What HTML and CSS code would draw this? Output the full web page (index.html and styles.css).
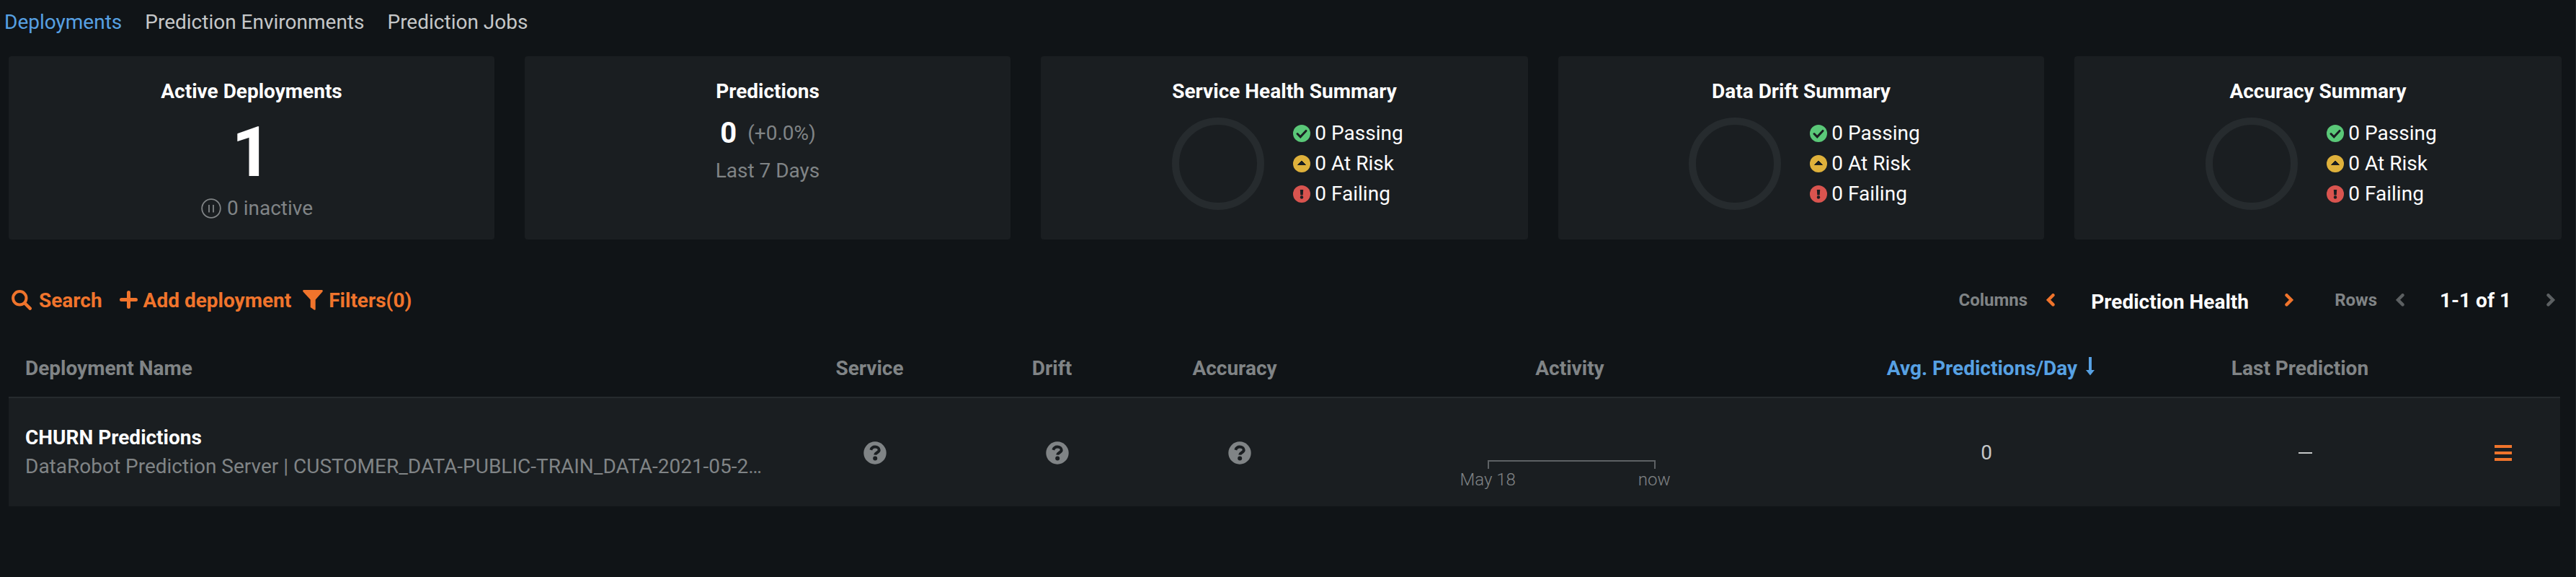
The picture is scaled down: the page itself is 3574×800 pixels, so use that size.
FILE: index.html
```html
<!DOCTYPE html>
<html lang="en">
<head>
<meta charset="utf-8">
<title>Deployments</title>
<link rel="stylesheet" href="styles.css">
</head>
<body>
<svg class="defs" width="0" height="0" aria-hidden="true">
  <symbol id="pass" viewBox="0 0 24 24"><circle cx="12" cy="12" r="12" fill="#5ac878"/><path d="M6 12.500l4.200 4.300 7.800-8.400" fill="none" stroke="#1a1e21" stroke-width="3" stroke-linecap="round"/></symbol>
  <symbol id="risk" viewBox="0 0 24 24"><circle cx="12" cy="12" r="12" fill="#dfb13b"/><path d="M12 8l5.500 5.500h-11z" fill="#1a1e21" stroke="#1a1e21" stroke-linejoin="round"/></symbol>
  <symbol id="fail" viewBox="0 0 24 24"><circle cx="12" cy="12" r="12" fill="#d9544f"/><path d="M9.800 6h4.400l-.5 7.500h-3.400z" fill="#1a1e21"/><circle cx="12" cy="16.500" r="2.200" fill="#1a1e21"/></symbol>
  <symbol id="help" viewBox="0 0 32 32"><circle cx="16" cy="16" r="15.700" fill="#808486"/><path d="M10.300 11.800c1-2.800 3-4.200 5.700-4.200 3.300 0 5.700 1.800 5.700 4.400 0 3.400-5.200 3.500-5.500 6.600" fill="none" stroke="#1a1e21" stroke-width="4"/><circle cx="16.200" cy="23.600" r="3" fill="#1a1e21"/></symbol>
</svg>
<nav class="tabs">
  <a class="tab active">Deployments</a>
  <a class="tab">Prediction Environments</a>
  <a class="tab">Prediction Jobs</a>
</nav>
<section class="cards">
  <article class="card">
    <h2>Active Deployments</h2>
    <div class="big">1</div>
    <div class="inactive"><svg width="28" height="28" viewBox="0 0 28 28" fill="none" stroke="#808486" stroke-width="1.800"><circle cx="14" cy="14" r="12.800"/><path d="M11 9v10.500M17 9v10.500"/></svg>0 inactive</div>
  </article>
  <article class="card">
    <h2>Predictions</h2>
    <div class="count"><b>0</b><span>(+0.0%)</span></div>
    <div class="period">Last 7 Days</div>
  </article>
  <article class="card">
    <h2>Service Health Summary</h2>
    <div class="summary"><div class="ring"></div><ul>
      <li><svg><use href="#pass"/></svg>0 Passing</li><li><svg><use href="#risk"/></svg>0 At Risk</li><li><svg><use href="#fail"/></svg>0 Failing</li></ul></div>
  </article>
  <article class="card">
    <h2>Data Drift Summary</h2>
    <div class="summary"><div class="ring"></div><ul>
      <li><svg><use href="#pass"/></svg>0 Passing</li><li><svg><use href="#risk"/></svg>0 At Risk</li><li><svg><use href="#fail"/></svg>0 Failing</li></ul></div>
  </article>
  <article class="card">
    <h2>Accuracy Summary</h2>
    <div class="summary"><div class="ring"></div><ul>
      <li><svg><use href="#pass"/></svg>0 Passing</li><li><svg><use href="#risk"/></svg>0 At Risk</li><li><svg><use href="#fail"/></svg>0 Failing</li></ul></div>
  </article>
</section>
<section class="toolbar">
  <a class="action search"><svg width="28" height="28" viewBox="0 0 28 28" fill="none" stroke="currentColor" stroke-linecap="round"><circle cx="11.300" cy="11.300" r="9.200" stroke-width="4"/><path d="M18.500 18.500l7.200 7.200" stroke-width="4.500"/></svg>Search</a>
  <a class="action add"><svg width="25" height="25" viewBox="0 0 25 25" stroke="currentColor" stroke-width="5" stroke-linecap="round"><path d="M12.500 2.500v20M2.500 12.500h20"/></svg>Add deployment</a>
  <a class="action filters"><svg width="28" height="28" viewBox="0 0 28 28" fill="currentColor"><path d="M1.200 0h25.600q1.800.8.600 2.600L17.700 13.500V27q-.7 1.300-2 .6L10.700 24V13.500L.6 2.600Q-.6.800 1.200 0z"/></svg>Filters(0)</a>
  <div class="pager">
    <span class="label">Columns</span>
    <svg class="chev hot" width="12" height="18" viewBox="0 0 12 18"><path d="M9.500 2.200L3 8.800l6.500 6.600"/></svg>
    <strong class="view">Prediction Health</strong>
    <svg class="chev hot" width="12" height="18" viewBox="0 0 12 18"><path d="M2.500 2.200L9 8.800l-6.500 6.600"/></svg>
    <span class="label rows">Rows</span>
    <svg class="chev" width="12" height="18" viewBox="0 0 12 18"><path d="M9.500 2.200L3 8.800l6.500 6.600"/></svg>
    <strong class="range">1-1 of 1</strong>
    <svg class="chev" width="12" height="18" viewBox="0 0 12 18"><path d="M2.500 2.200L9 8.800l-6.500 6.600"/></svg>
  </div>
</section>
<section class="table">
  <div class="row head">
    <span>Deployment Name</span><span class="c">Service</span><span class="c">Drift</span><span class="c">Accuracy</span><span class="c wide">Activity</span>
    <span class="c sorted">Avg. Predictions/Day<svg width="12" height="26" viewBox="0 0 12 26"><path d="M6 0v20" stroke="currentColor" stroke-width="4"/><path d="M0 18h12l-6 7.500z" fill="currentColor"/></svg></span>
    <span class="c">Last Prediction</span><span></span>
  </div>
  <div class="row body">
    <div class="name"><strong>CHURN Predictions</strong><span>DataRobot Prediction Server | CUSTOMER_DATA-PUBLIC-TRAIN_DATA-2021-05-2…</span></div>
    <span class="c status"><svg><use href="#help"/></svg></span>
    <span class="c status"><svg><use href="#help"/></svg></span>
    <span class="c status"><svg><use href="#help"/></svg></span>
    <div class="activity"><div class="axis"></div><div class="ticks"><span>May 18</span><span>now</span></div></div>
    <span class="c avg">0</span>
    <span class="c"><i class="dash"></i></span>
    <span class="c actions"><i class="menu"></i></span>
  </div>
</section>
</body>
</html>
```

FILE: styles.css
```css
* { box-sizing: border-box; }
body {
  margin: 0;
  height: 800px;
  overflow: hidden;
  background: #101417;
  border-right: 1px solid #1f2427;
  color: #c5c7c8;
  font: 400 28px/36px Roboto, sans-serif;
}
.defs { position: absolute; }
svg { display: block; flex: none; }

.tabs { display: flex; gap: 32px; height: 78px; padding: 13px 0 0 6px; }
.active { color: #57a1e3; }

.cards { display: grid; grid-template-columns: 674px 674px 676px 674px 676px; gap: 42px; padding-left: 12px; }
.card {
  height: 254px;
  padding-top: 31px;
  border-radius: 4px;
  background: #1a1e21;
  display: flex;
  flex-direction: column;
  align-items: center;
}
h2 { margin: 0; font-size: 28px; line-height: 36px; font-weight: 700; color: #fff; }
.big { margin-top: 16px; font-size: 96px; line-height: 100px; font-weight: 700; color: #fff; }
.inactive { display: flex; align-items: center; gap: 8px; margin-top: 10px; padding-left: 15px; color: #808486; }
.count { display: flex; align-items: center; gap: 15px; margin-top: 15px; padding-left: 1px; line-height: 50px; color: #808486; }
.count b { font-size: 40px; font-weight: 700; color: #fff; }
.period { margin-top: 9px; color: #808486; }
.summary { display: flex; align-items: center; gap: 40px; margin-top: 18px; padding-left: 9px; }
.ring { width: 128px; height: 128px; border: 10px solid #262b2e; border-radius: 50%; }
.summary ul { margin: 0; padding: 0; list-style: none; color: #fff; line-height: 42px; }
.summary li { display: flex; align-items: center; gap: 6px; }
.summary svg { width: 24px; height: 24px; }

.toolbar { display: flex; align-items: center; height: 60px; margin-top: 54px; padding: 0 28px 0 16px; }
.action { display: flex; align-items: center; padding-top: 2px; color: #f0742c; font-weight: 700; }
.action svg { margin-bottom: 3px; }
.search { gap: 10px; }
.add { gap: 8px; margin-left: 24px; }
.filters { gap: 8px; margin-left: 16px; }
.pager { display: flex; align-items: center; margin-left: auto; }
.label { margin-right: 26px; font-size: 24px; font-weight: 700; color: #808486; }
.rows { margin-left: 57px; }
.chev { fill: none; stroke: #5c6062; stroke-width: 4.4; stroke-linecap: round; }
.hot { stroke: #f0742c; }
.view { width: 319px; padding-top: 6px; text-align: center; font-weight: 700; color: #fff; }
.range { width: 197px; padding-top: 2px; text-align: center; font-weight: 700; color: #fff; }

.table { margin: 28px 21px 0 12px; }
.row { display: grid; grid-template-columns: 1075px 253px 253px 254px 667px 484px 400px 154px; align-items: center; }
.head { height: 76px; padding-bottom: 2px; color: #808486; font-weight: 700; }
.row > :first-child { padding-left: 23px; }
.c { display: flex; justify-content: center; align-items: center; }
.head .c { padding-right: 14px; }
.head .wide { padding-right: 5px; }
.head .sorted { gap: 12px; padding: 0 0 0 12px; color: #57a1e3; }
.sorted svg { margin-bottom: 7px; }
.body { height: 152px; border-top: 2px solid #262b2e; background: #1a1e21; }
.body .c { padding-top: 2px; }
.name { display: flex; flex-direction: column; line-height: 40px; color: #808486; }
.name strong { font-weight: 700; color: #fff; }
.status svg { width: 32px; height: 32px; }
.activity { display: flex; flex-direction: column; align-items: center; padding-top: 64px; }
.axis { width: 233px; height: 12px; border: 2px solid #5d6164; border-bottom: 0; }
.ticks { display: flex; justify-content: space-between; width: 292px; margin-right: 18px; font-size: 24px; line-height: 30px; font-weight: 300; color: #808486; }
.dash { width: 19px; height: 2px; background: #c5c7c8; }
.body .actions { padding-right: 4px; }
.menu { width: 24px; height: 22px; border: solid #f0742c; border-width: 4px 0; background: linear-gradient(#f0742c, #f0742c) center / 100% 4px no-repeat; }
```
